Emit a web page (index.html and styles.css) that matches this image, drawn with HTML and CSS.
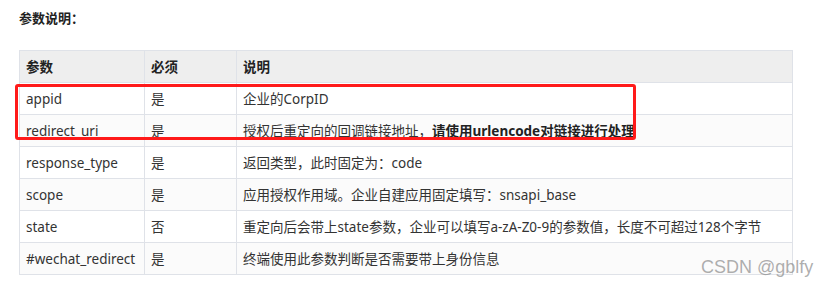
FILE: index.html
```html
<!DOCTYPE html>
<html lang="zh-CN">
<head>
<meta charset="utf-8">
<title>参数说明</title>
<link rel="stylesheet" href="styles.css">
</head>
<body>
<div class="page">
  <p class="title">参数说明：</p>
  <div class="table-wrap">
    <table class="params">
      <thead>
        <tr><th class="c1">参数</th><th class="c2">必须</th><th class="c3">说明</th></tr>
      </thead>
      <tbody>
        <tr><td>appid</td><td>是</td><td>企业的CorpID</td></tr>
        <tr class="alt"><td>redirect_uri</td><td>是</td><td>授权后重定向的回调链接地址，<strong>请使用urlencode对链接进行处理</strong></td></tr>
        <tr><td>response_type</td><td>是</td><td>返回类型，此时固定为：code</td></tr>
        <tr class="alt"><td>scope</td><td>是</td><td>应用授权作用域。企业自建应用固定填写：snsapi_base</td></tr>
        <tr><td>state</td><td>否</td><td>重定向后会带上state参数，企业可以填写a-zA-Z0-9的参数值，长度不可超过128个字节</td></tr>
        <tr class="alt"><td>#wechat_redirect</td><td>是</td><td>终端使用此参数判断是否需要带上身份信息</td></tr>
      </tbody>
    </table>
    <div class="highlight"></div>
  </div>
  <div class="watermark">CSDN @gblfy</div>
</div>
</body>
</html>
```
FILE: styles.css
```css
html, body {
  margin: 0;
  padding: 0;
  background: #ffffff;
}
.page {
  position: relative;
  width: 828px;
  height: 288px;
  padding: 0 0 0 19px;
  box-sizing: border-box;
  font-family: "Noto Sans", "Noto Sans CJK SC", sans-serif;
  color: #333333;
}
.title {
  margin: 0;
  padding-top: 9px;
  height: 50px;
  box-sizing: border-box;
  font-size: 13px;
  line-height: 18px;
  font-weight: bold;
  color: #222222;
}
.table-wrap {
  position: relative;
  width: 774px;
}
.params {
  width: 774px;
  border-collapse: collapse;
  table-layout: fixed;
  font-size: 13.5px;
}
.params th, .params td {
  border: 1px solid #dfe2e8;
  height: 31px;
  padding: 0 6px;
  text-align: left;
  vertical-align: middle;
  white-space: nowrap;
  line-height: 20px;
}
.params th {
  background: #eeeeee;
  font-weight: bold;
  color: #222222;
}
.params .c1 { width: 112px; }
.params .c2 { width: 79px; }
.params tr.alt td {
  background: #fbfbfb;
}
.params strong {
  color: #222222;
}
.highlight {
  position: absolute;
  left: -4px;
  top: 34px;
  width: 615px;
  height: 50px;
  border: 3px solid #ff1a1a;
  border-radius: 3px;
}
.watermark {
  position: absolute;
  left: 701px;
  top: 257px;
  font-family: "Liberation Sans", Arial, sans-serif;
  font-size: 18px;
  color: rgba(120, 120, 120, 0.6);
  white-space: nowrap;
}
```
